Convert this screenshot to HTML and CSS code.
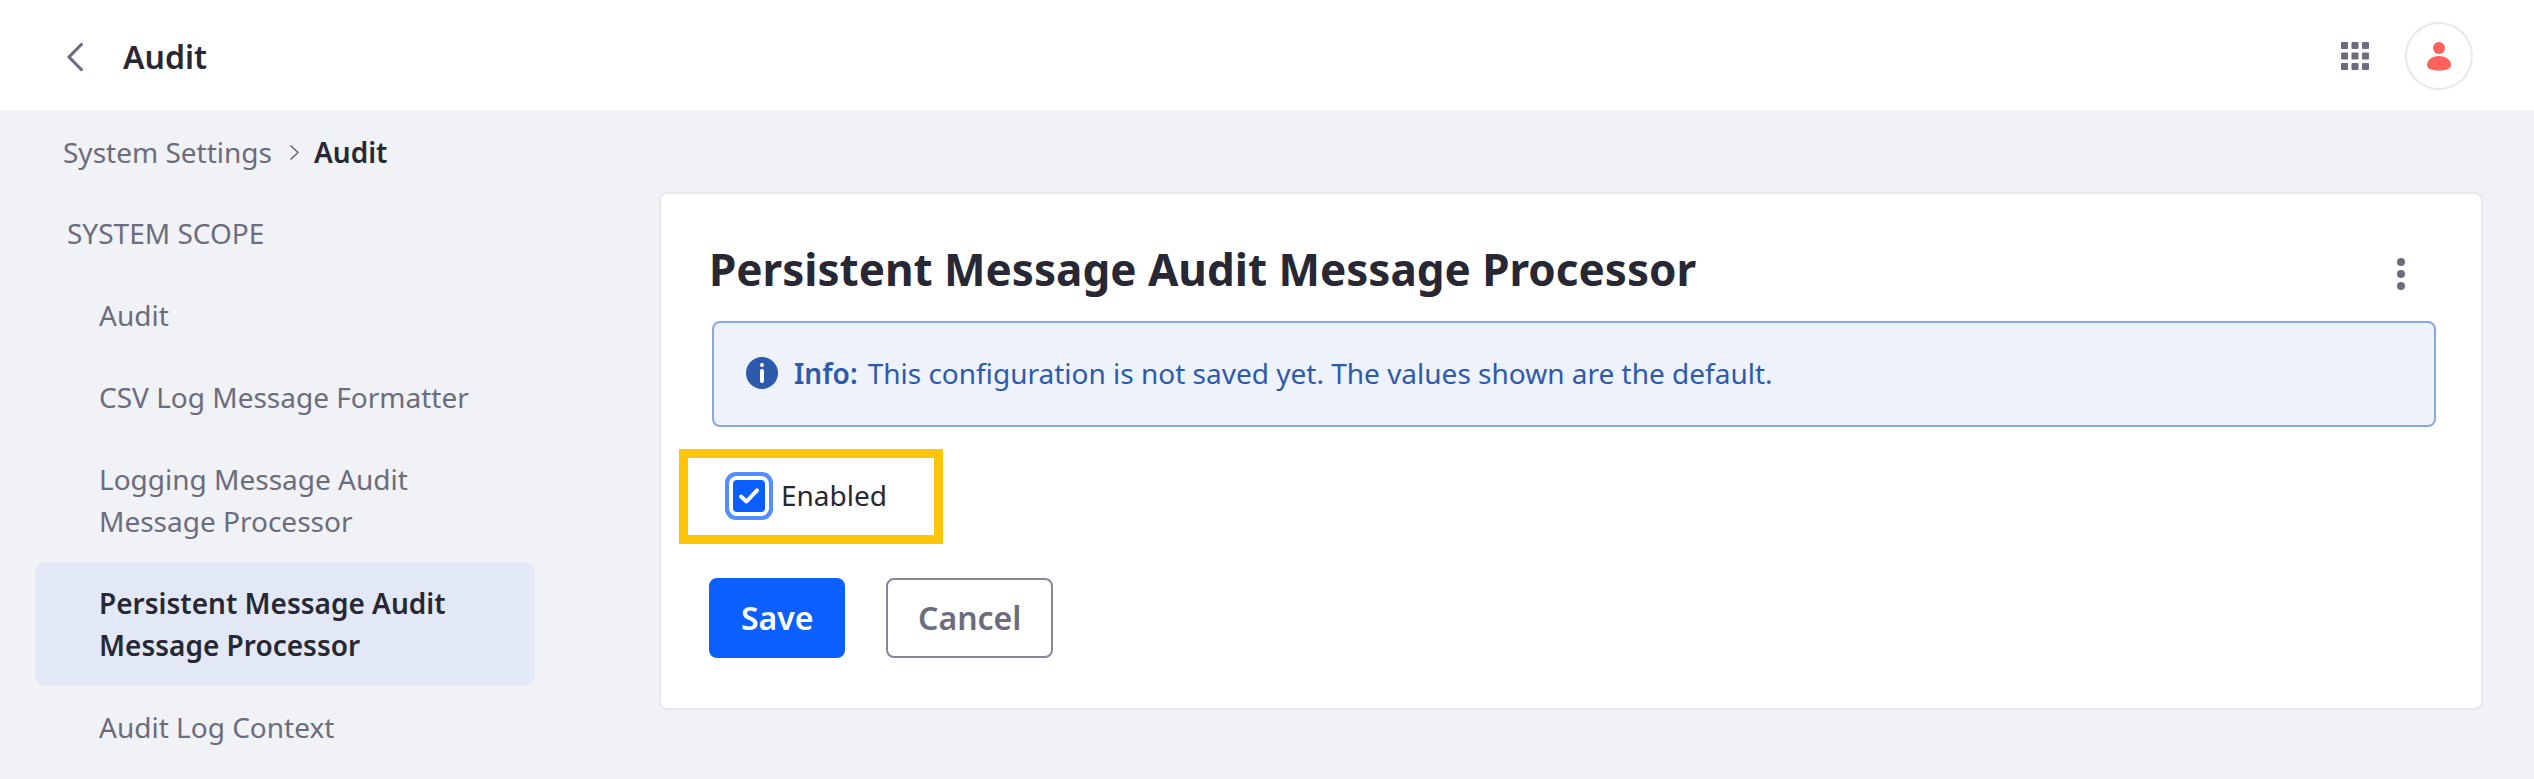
FILE: index.html
```html
<!DOCTYPE html>
<html lang="en">
<head>
<meta charset="utf-8">
<title>Audit</title>
<link rel="stylesheet" href="styles.css">
</head>
<body>
<header class="topbar">
  <a class="back" aria-label="Back"><svg width="16" height="30" viewBox="0 0 16 30"><path d="M14.300 2.500 2 15 14.300 27.500" fill="none" stroke="currentColor" stroke-width="3.200" stroke-linecap="round" stroke-linejoin="round"/></svg></a>
  <h1 class="topbar-title">Audit</h1>
  <svg class="apps" width="28" height="28" viewBox="0 0 28 28" fill="currentColor"><rect width="7" height="7" rx="1"/><rect x="10.5" width="7" height="7" rx="1"/><rect x="21" width="7" height="7" rx="1"/><rect y="10.5" width="7" height="7" rx="1"/><rect x="10.5" y="10.5" width="7" height="7" rx="1"/><rect x="21" y="10.5" width="7" height="7" rx="1"/><rect y="21" width="7" height="7" rx="1"/><rect x="10.5" y="21" width="7" height="7" rx="1"/><rect x="21" y="21" width="7" height="7" rx="1"/></svg>
  <div class="avatar"><svg width="24" height="29" viewBox="0 0 24 29" fill="currentColor"><circle cx="12" cy="6" r="6"/><path d="M12 14C5 14 0 18.200 0 23C0 26.800 5 28.500 12 28.500S24 26.800 24 23C24 18.200 19 14 12 14Z"/></svg></div>
</header>
<nav class="breadcrumb">
  <a>System Settings</a>
  <svg class="crumb-arrow" width="9" height="15" viewBox="0 0 9 15"><path d="M1 1 8 7.500 1 14" fill="none" stroke="currentColor" stroke-width="1.700" stroke-linecap="round" stroke-linejoin="round"/></svg>
  <span class="current">Audit</span>
</nav>
<div class="layout">
  <aside class="sidebar">
    <h2 class="scope">SYSTEM SCOPE</h2>
    <ul class="menu">
      <li class="menu-item">Audit</li>
      <li class="menu-item">CSV Log Message Formatter</li>
      <li class="menu-item">Logging Message Audit Message Processor</li>
      <li class="menu-item active">Persistent Message Audit Message Processor</li>
      <li class="menu-item">Audit Log Context</li>
    </ul>
  </aside>
  <main class="card">
    <div class="card-head">
      <h2 class="card-title">Persistent Message Audit Message Processor</h2>
      <svg class="kebab" width="8" height="32" viewBox="0 0 8 32" fill="currentColor"><circle cx="4" cy="4" r="4"/><circle cx="4" cy="16" r="4"/><circle cx="4" cy="28" r="4"/></svg>
    </div>
    <div class="alert">
      <svg class="alert-icon" width="32" height="32" viewBox="0 0 32 32"><circle cx="16" cy="16" r="16" fill="#2e5aac"/><circle cx="16" cy="8" r="2" fill="#fff"/><rect x="14" y="12" width="4" height="14" rx="2" fill="#fff"/></svg>
      <strong class="alert-lead">Info:</strong><span class="alert-text">This configuration is not saved yet. The values shown are the default.</span>
    </div>
    <label class="field">
      <span class="checkbox"><svg width="20" height="16" viewBox="0 0 20 16"><path d="M2 8.500 7.500 13.500 18 2.300" fill="none" stroke="#fff" stroke-width="4" stroke-linecap="round" stroke-linejoin="round"/></svg></span>
      <span class="field-label">Enabled</span>
    </label>
    <div class="actions">
      <button class="btn primary">Save</button>
      <button class="btn secondary">Cancel</button>
    </div>
  </main>
</div>
</body>
</html>
```

FILE: styles.css
```css
* { box-sizing: border-box; }
body {
  margin: 0;
  height: 779px;
  overflow: hidden;
  background: #f1f2f5;
  color: #272833;
  font: 28px/42px "Noto Sans", sans-serif;
}
h1, h2, ul { margin: 0; padding: 0; list-style: none; }
svg { display: block; flex: none; }
.topbar {
  height: 110px;
  padding: 0 61px 0 67px;
  display: flex;
  align-items: center;
  background: #fff;
  color: #6b6c7e;
}
.back { margin: 3px 40px 0 0; }
.topbar-title { font-size: 32px; font-weight: 600; line-height: 48px; margin-top: 3px; color: #272833; }
.apps { margin: 2px 36px 0 auto; }
.avatar {
  width: 68px;
  height: 68px;
  margin-top: 2px;
  border: 2px solid #e7e7ed;
  border-radius: 50%;
  display: flex;
  align-items: center;
  justify-content: center;
  color: #ff625c;
}
.breadcrumb {
  height: 82px;
  padding: 21px 0 0 63px;
  display: flex;
  align-items: flex-start;
  color: #6b6c7e;
}
.crumb-arrow { margin: 14px 15px 0 18px; }
.current { font-weight: 600; color: #272833; }
.layout { display: flex; align-items: flex-start; }
.sidebar { width: 500px; margin: 0 124px 0 35px; color: #6b6c7e; }
.scope { font-size: 28px; font-weight: 400; height: 82px; padding: 20px 0 0 32px; }
.menu-item { padding: 20px 40px 20px 64px; }
.active {
  background: #e3e8f7;
  border-radius: 12px;
  color: #272833;
  font-weight: 600;
}
.card {
  flex: none;
  width: 1824px;
  height: 518px;
  background: #fff;
  border: 2px solid #e7e7ed;
  border-radius: 8px;
}
.card-head {
  height: 127px;
  padding: 45px 76px 0 48px;
  display: flex;
  justify-content: space-between;
}
.card-title { font-size: 44px; font-weight: 700; line-height: 60px; }
.kebab { margin-top: 19px; color: #6b6c7e; }
.alert {
  height: 106px;
  margin: 0 45px 0 51px;
  padding: 0 32px;
  display: flex;
  align-items: center;
  background: #edf2fb;
  border: 2px solid #89a7e0;
  border-radius: 8px;
  color: #2e5aac;
}
.alert-icon { margin: -2px 16px 0 0; }
.alert-lead, .alert-text { margin-top: -2px; }
.alert-lead { font-weight: 600; margin-right: 10px; }
.field {
  width: 264px;
  height: 95px;
  margin: 22px 0 0 18px;
  border: 9px solid #ffc50a;
  display: flex;
  align-items: center;
  padding: 0 0 1px 45px;
}
.field-label { margin-top: -2px; }
.checkbox {
  width: 32px;
  height: 32px;
  margin-right: 16px;
  display: flex;
  align-items: center;
  justify-content: center;
  border-radius: 4px;
  background: #0b5fff;
  box-shadow: 0 0 0 4px #fff, 0 0 0 8px #528eff;
}
.actions { display: flex; gap: 41px; margin: 34px 0 0 48px; }
.btn {
  height: 80px;
  padding: 0 30px;
  border: 2px solid #0b5fff;
  border-radius: 8px;
  font: 600 32px/48px "Noto Sans", sans-serif;
}
.primary { width: 136px; background: #0b5fff; color: #fff; }
.secondary { width: 167px; background: #fff; border-color: #868799; color: #6b6c7e; }
```
